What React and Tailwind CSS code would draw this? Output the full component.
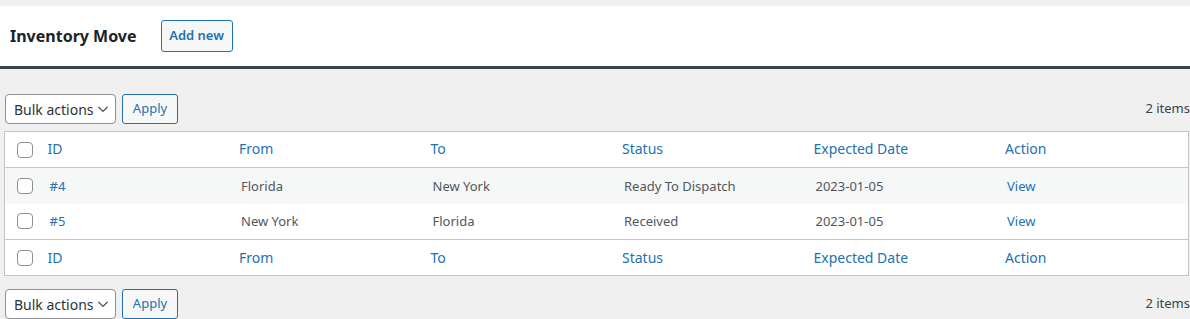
import React from "react";

const rows = [
  { id: "#4", from: "Florida", to: "New York", status: "Ready To Dispatch", date: "2023-01-05" },
  { id: "#5", from: "New York", to: "Florida", status: "Received", date: "2023-01-05" },
];

const columns = ["ID", "From", "To", "Status", "Expected Date", "Action"];

const Checkbox = () => (
  <span className="block w-4 h-4 rounded-[4px] border border-[#8c8f94] bg-white" />
);

const TableNav = () => (
  <div className="flex items-center h-[30px]">
    <div className="flex items-center justify-between w-[111px] h-[30px] ml-[1px] pl-[8px] pr-[6px] border border-[#8c8f94] rounded-[4px] bg-white text-[14px] text-[#2c3338]">
      <span>Bulk actions</span>
      <svg width="12" height="12" viewBox="0 0 20 20" fill="none" stroke="#50575e" strokeWidth="2.2" strokeLinecap="round" strokeLinejoin="round">
        <path d="M3 7l7 7 7-7" />
      </svg>
    </div>
    <button className="ml-[6px] w-[56px] h-[30px] border border-[#2271b1] rounded-[3px] bg-[#f6f7f7] text-[13px] text-[#2271b1]">
      Apply
    </button>
    <span className="ml-auto -mr-[1px] text-[13px] text-[#3c434a]">2 items</span>
  </div>
);

const HeadRow = ({ top }) => (
  <tr className={`h-[36px] ${top ? "border-b" : "border-t"} border-[#c3c4c7]`}>
    <td className="w-[35px] pl-[12px]">
      <Checkbox />
    </td>
    {columns.map((c) => (
      <td key={c} className={`px-[8px] text-[14px] text-[#2271b1] ${top ? "pb-[2px]" : ""}`}>
        {c}
      </td>
    ))}
  </tr>
);

export default function App() {
  return (
    <div className="w-full h-[319px] overflow-hidden bg-[#f0f0f1]" style={{ fontFamily: '"Noto Sans", "Open Sans", sans-serif' }}>
      <div className="w-[1194px]">
        <div className="h-[6px]" />
        <div className="flex items-center h-[63px] bg-white border-b-[3px] border-[#3c434a]">
          <h1 className="ml-[10px] text-[16px] font-bold text-[#1d2327]">Inventory Move</h1>
          <button className="ml-[24px] w-[72px] h-[32px] border border-[#2271b1] rounded-[3px] bg-[#f6f7f7] text-[13px] font-semibold text-[#2271b1]">
            Add new
          </button>
        </div>
        <div className="pl-[4px] pr-[5px]">
          <div className="pt-[25px]">
            <TableNav />
          </div>
          <table className="mt-[7px] w-[1185px] table-fixed border border-[#c3c4c7] bg-white border-collapse">
            <colgroup>
              <col className="w-[35px]" />
              <col />
              <col />
              <col />
              <col />
              <col />
              <col />
            </colgroup>
            <thead>
              <HeadRow top />
            </thead>
            <tbody>
              {rows.map((r, i) => (
                <tr key={r.id} className={`h-[36px] ${i % 2 === 0 ? "bg-[#f6f7f7]" : "bg-white"} text-[13px] text-[#50575e]`}>
                  <td className="pl-[12px]">
                    <Checkbox />
                  </td>
                  <td className="px-[10px] pt-[1px] text-[#2271b1]">{r.id}</td>
                  <td className="px-[10px] pt-[1px]">{r.from}</td>
                  <td className="px-[10px] pt-[1px]">{r.to}</td>
                  <td className="px-[10px] pt-[1px]">{r.status}</td>
                  <td className="px-[10px] pt-[1px]">{r.date}</td>
                  <td className="px-[10px] pt-[1px] text-[#2271b1]">View</td>
                </tr>
              ))}
            </tbody>
            <tfoot>
              <HeadRow />
            </tfoot>
          </table>
          <div className="pt-[13px]">
            <TableNav />
          </div>
        </div>
      </div>
    </div>
  );
}
